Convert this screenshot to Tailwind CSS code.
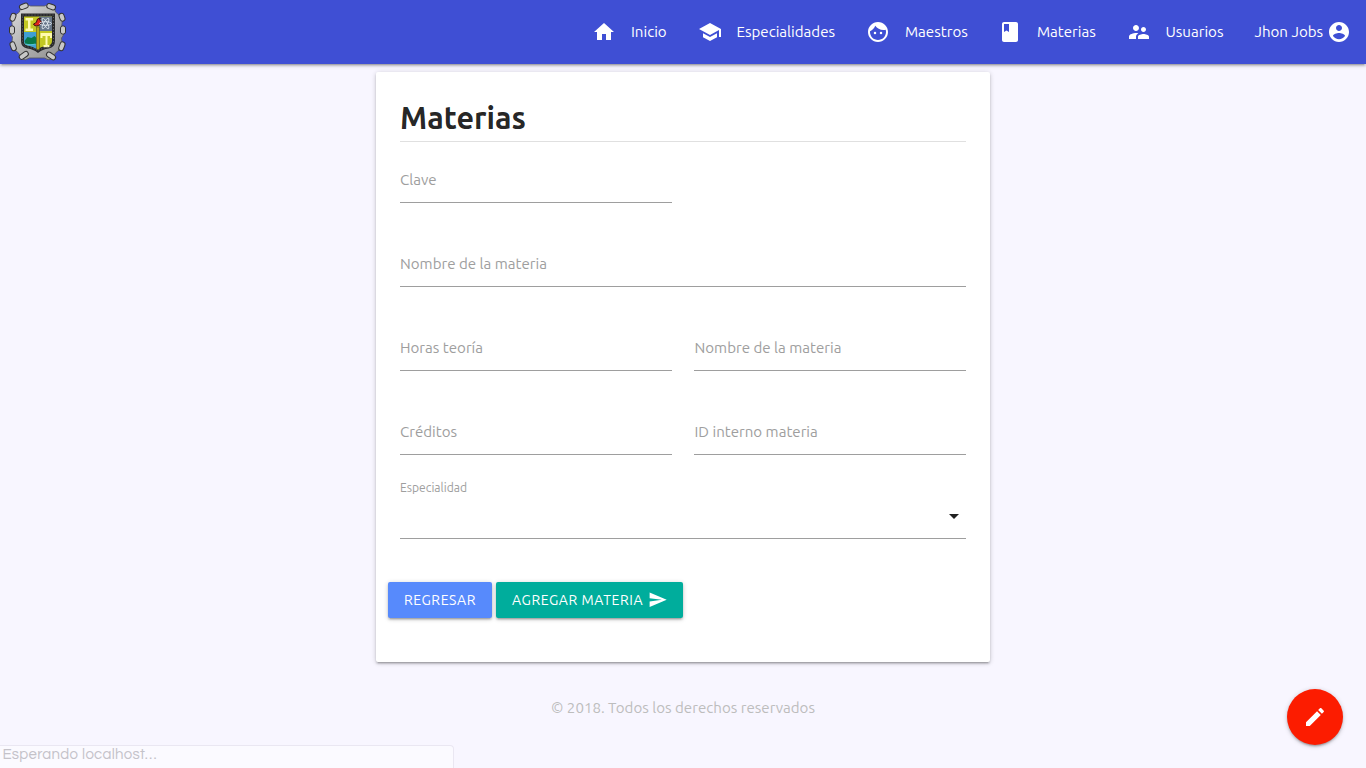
<!DOCTYPE html>
<html lang="es">
<head>
<meta charset="utf-8">
<title>Materias</title>
<script src="https://cdn.jsdelivr.net/npm/@tailwindcss/browser@4"></script>
</head>
<body class="relative h-screen overflow-hidden bg-[#f8f6ff] font-['Ubuntu','Noto_Sans',sans-serif] text-[15.100px] text-black/87">
<nav class="relative flex h-16 items-center bg-[#3f4fd4] text-white shadow-[0_2px_2px_0_rgba(0,0,0,0.14),0_3px_1px_-2px_rgba(0,0,0,0.12),0_1px_5px_0_rgba(0,0,0,0.2)]">
  <a class="ml-2 block" href="#" aria-label="Inicio">
    <svg class="block" width="60" height="60" viewBox="0.5 0 60 60">
      <defs>
        <linearGradient id="steel" x1="0" y1="0" x2="1" y2="1"><stop offset="0" stop-color="#dedede"/><stop offset=".5" stop-color="#b2b2b2"/><stop offset="1" stop-color="#8c8c8c"/></linearGradient>
      </defs>
      <path d="M14 3q5-2 9 1h14q4-3 9-1l2 7 7 6-1 11q4 5 0 9l1 9-7 6-3 6q-5 2-8-1H22q-4 3-8 1l-3-6-7-6 1-10q-4-4 0-8L4 16l8-6z" fill="url(#steel)" stroke="#55565c" stroke-width=".8"/>
      <g fill="#c8c8c8" stroke="#333" stroke-width="1">
        <rect x="12" y="2" width="9" height="5" rx="2.500" transform="rotate(-20 16 5)"/><rect x="39" y="2" width="9" height="5" rx="2.500" transform="rotate(20 43 5)"/>
        <rect x="3" y="11" width="5" height="8" rx="2.500" transform="rotate(20 5 15)"/><rect x="52" y="11" width="5" height="8" rx="2.500" transform="rotate(-20 55 15)"/>
        <rect x="2" y="24" width="5" height="8" rx="2"/><rect x="53" y="24" width="5" height="8" rx="2"/>
        <rect x="3" y="40" width="5" height="9" rx="2.500" transform="rotate(-20 5 44)"/><rect x="52" y="40" width="5" height="9" rx="2.500" transform="rotate(20 55 44)"/>
        <rect x="11" y="51" width="10" height="5" rx="2.500" transform="rotate(-35 16 53)"/><rect x="39" y="51" width="10" height="5" rx="2.500" transform="rotate(35 43 53)"/>
      </g>
      <path d="M15 13h31v26q0 5-5 6-7 1-10.500 4Q27 46 20 45q-5-1-5-6z" fill="#c3c823" stroke="#29292b" stroke-width="3"/>
      <path d="M31.500 14.500h13V29h-13z" fill="#68778a"/>
      <path d="M16.500 30H29v17q-4-3-9-3.500-3.500-.5-3.500-4z" fill="#3f9fd3"/>
      <path d="M17 39l3-4 4 1 3-2 2 2v6H18z" fill="#08794b"/>
      <path d="M18 42q5 2 10 0" fill="none" stroke="#57c5cf"/>
      <path d="M29 25h3v22l-1.500 1-1.500-1z" fill="#b9ab18" stroke="#58581c" stroke-width=".6"/>
      <path d="M26 22q2-.5 3-2 0-4 4-4l-1 2q3 1 1 4-1.500 2-4 2-2.500 0-3-2z" fill="#e0251d" stroke="#351210" stroke-width="1"/>
      <path d="M18 16h7.500v2.500H23v8h2.500V29H18v-2.500h2.500v-8H18z" fill="#fffbb0"/>
      <path d="M33 31h11.500v5h-2v-2h-2.500v9h2v2.300h-6V43h2v-9h-3v2h-2z" fill="#fffbb0"/>
      <g fill="none" stroke="#e6edf3" stroke-width=".8"><ellipse cx="38" cy="21.500" rx="6" ry="1.800"/><ellipse cx="38" cy="21.500" rx="6" ry="1.800" transform="rotate(60 38 21.500)"/><ellipse cx="38" cy="21.500" rx="6" ry="1.800" transform="rotate(120 38 21.500)"/></g>
      <path d="M15 13h31v26q0 5-5 6-7 1-10.500 4Q27 46 20 45q-5-1-5-6z" fill="none" stroke="#77777a" stroke-width=".8" stroke-dasharray="1 2"/>
    </svg>
  </a>
  <ul class="ml-auto flex h-full items-center whitespace-nowrap">
    <li class="flex items-center gap-[15px] px-[15px]"><svg class="size-6 fill-current" viewBox="0 0 24 24"><path d="M10 20v-6h4v6h5v-8h3L12 3 2 12h3v8z"/></svg><a class="w-[36.500px]">Inicio</a></li>
    <li class="flex items-center gap-[15px] px-[15px]"><svg class="size-6 fill-current" viewBox="0 0 24 24"><path d="M5 13.180v4L12 21l7-3.820v-4L12 17l-7-3.820zM12 3L1 9l11 6 9-4.910V17h2V9L12 3z"/></svg><a class="w-[99.500px]">Especialidades</a></li>
    <li class="flex items-center gap-[15px] px-[15px]"><svg class="size-6 fill-current" viewBox="0 0 24 24"><path d="M9 11.750a1.250 1.250 0 1 0 0 2.500 1.250 1.250 0 0 0 0-2.500zm6 0a1.250 1.250 0 1 0 0 2.500 1.250 1.250 0 0 0 0-2.500zM12 2C6.480 2 2 6.480 2 12s4.480 10 10 10 10-4.480 10-10S17.520 2 12 2zm0 18c-4.410 0-8-3.590-8-8 0-.29.020-.58.050-.86 2.360-1.050 4.230-2.980 5.210-5.370C11.070 8.330 14.050 10 17.420 10c.78 0 1.530-.09 2.250-.26.21.71.33 1.470.33 2.260 0 4.410-3.590 8-8 8z"/></svg><a class="w-[63px]">Maestros</a></li>
    <li class="flex items-center gap-[15px] px-[15px]"><svg class="size-6 fill-current" viewBox="0 0 24 24"><path d="M18 2H6c-1.100 0-2 .9-2 2v16c0 1.100.9 2 2 2h12c1.100 0 2-.9 2-2V4c0-1.100-.9-2-2-2zM6 4h5v8l-2.500-1.500L6 12V4z"/></svg><a class="w-[59.500px]">Materias</a></li>
    <li class="flex items-center gap-[15px] px-[15px]"><svg class="size-6 fill-current" viewBox="0 0 24 24"><path d="M16.500 12c1.380 0 2.490-1.120 2.490-2.500S17.880 7 16.500 7C15.120 7 14 8.120 14 9.500s1.120 2.500 2.500 2.500zM9 11c1.660 0 2.990-1.340 2.990-3S10.660 5 9 5C7.340 5 6 6.340 6 8s1.340 3 3 3zm7.500 3c-1.830 0-5.500.92-5.500 2.750V19h11v-2.250c0-1.830-3.670-2.750-5.500-2.750zM9 13c-2.330 0-7 1.170-7 3.500V19h7v-2.250c0-.85.33-2.340 2.370-3.470C10.500 13.100 9.660 13 9 13z"/></svg><a class="w-[59px]">Usuarios</a></li>
    <li class="flex items-center gap-1 px-[15px]"><a class="w-[68.500px]">Jhon Jobs</a><svg class="size-6 fill-current" viewBox="0 0 24 24"><path d="M12 2C6.480 2 2 6.480 2 12s4.480 10 10 10 10-4.480 10-10S17.520 2 12 2zm0 3c1.660 0 3 1.340 3 3s-1.340 3-3 3-3-1.340-3-3 1.340-3 3-3zm0 14.200c-2.500 0-4.710-1.280-6-3.220.03-1.990 4-3.080 6-3.080 1.990 0 5.970 1.090 6 3.080-1.290 1.940-3.500 3.220-6 3.220z"/></svg></li>
  </ul>
</nav>
<main class="mx-auto mt-2 h-[590px] w-[614px] rounded-[2px] bg-white px-6 pt-6 shadow-[0_2px_2px_0_rgba(0,0,0,0.14),0_3px_1px_-2px_rgba(0,0,0,0.12),0_1px_5px_0_rgba(0,0,0,0.2)]">
  <h1 class="h-[46px] border-b border-[#e0e0e0] text-[30.500px] leading-[45px] font-bold">Materias</h1>
  <form class="grid grid-cols-2 gap-x-[22px] text-[#9e9e9e]">
    <div class="h-[61px] border-b border-[#9e9e9e] pt-[27px] leading-[22px]">Clave</div><div></div>
    <div class="col-span-2 h-[84px] border-b border-[#9e9e9e] pt-[50px] leading-[22px]">Nombre de la materia</div>
    <div class="h-[84px] border-b border-[#9e9e9e] pt-[50px] leading-[22px]">Horas teoría</div>
    <div class="h-[84px] border-b border-[#9e9e9e] pt-[50px] pl-[0.5px] leading-[22px]">Nombre de la materia</div>
    <div class="h-[84px] border-b border-[#9e9e9e] pt-[50px] leading-[22px]">Créditos</div>
    <div class="h-[84px] border-b border-[#9e9e9e] pt-[50px] pl-[0.5px] leading-[22px]">ID interno materia</div>
    <div class="col-span-2 flex h-[84px] justify-between border-b border-[#9e9e9e] pt-[24px] text-[12.100px] leading-[18px]"><span>Especialidad</span><svg class="mt-[35px] mr-[7px] h-[5px] w-[10px] fill-[#212121]" viewBox="0 0 10 5"><path d="M0 0l5 5 5-5z"/></svg></div>
  </form>
  <div class="-ml-3 mt-[43px] flex gap-1 text-[14px] tracking-[0.570px] text-white">
    <button class="flex h-9 w-[104px] items-center rounded-[2px] bg-[#578afc] pl-4 whitespace-nowrap shadow-[0_2px_2px_0_rgba(0,0,0,0.14),0_3px_1px_-2px_rgba(0,0,0,0.12),0_1px_5px_0_rgba(0,0,0,0.2)]">REGRESAR</button>
    <button class="flex h-9 w-[187px] items-center rounded-[2px] bg-[#00ad9c] pl-4 whitespace-nowrap shadow-[0_2px_2px_0_rgba(0,0,0,0.14),0_3px_1px_-2px_rgba(0,0,0,0.12),0_1px_5px_0_rgba(0,0,0,0.2)]"><span class="w-[135.500px] text-left">AGREGAR MATERIA</span><svg class="size-[19.500px] fill-current" viewBox="0 0 24 24"><path d="M2.010 21L23 12 2.010 3 2 10l15 2-15 2z"/></svg></button>
  </div>
</main>
<footer class="mt-[35px] text-center leading-[22px] text-[#bdbdbd]">© 2018. Todos los derechos reservados</footer>
<button class="absolute top-[689px] left-[1287px] flex size-14 items-center justify-center rounded-full bg-[#fc1c00] text-white shadow-[0_2px_2px_0_rgba(0,0,0,0.14),0_3px_1px_-2px_rgba(0,0,0,0.12),0_1px_5px_0_rgba(0,0,0,0.2)]"><svg class="size-6 fill-current" viewBox="0 0 24 24"><path d="M3 17.250V21h3.750L17.810 9.940l-3.750-3.750L3 17.250zM20.710 7.040c.39-.39.39-1.020 0-1.410l-2.340-2.340c-.39-.39-1.020-.39-1.410 0l-1.830 1.830 3.750 3.750 1.830-1.830z"/></svg></button>
<div class="absolute bottom-0 left-0 h-[23px] w-[454px] rounded-tr-[4px] border-t border-r border-[#eae7f2] bg-[#fbfaff] pl-[2.500px] font-['Questrial','Lato',sans-serif] text-[15px] leading-[18px] tracking-[0.250px] text-[#c4c2c9]">Esperando localhost…</div>
</body>
</html>
